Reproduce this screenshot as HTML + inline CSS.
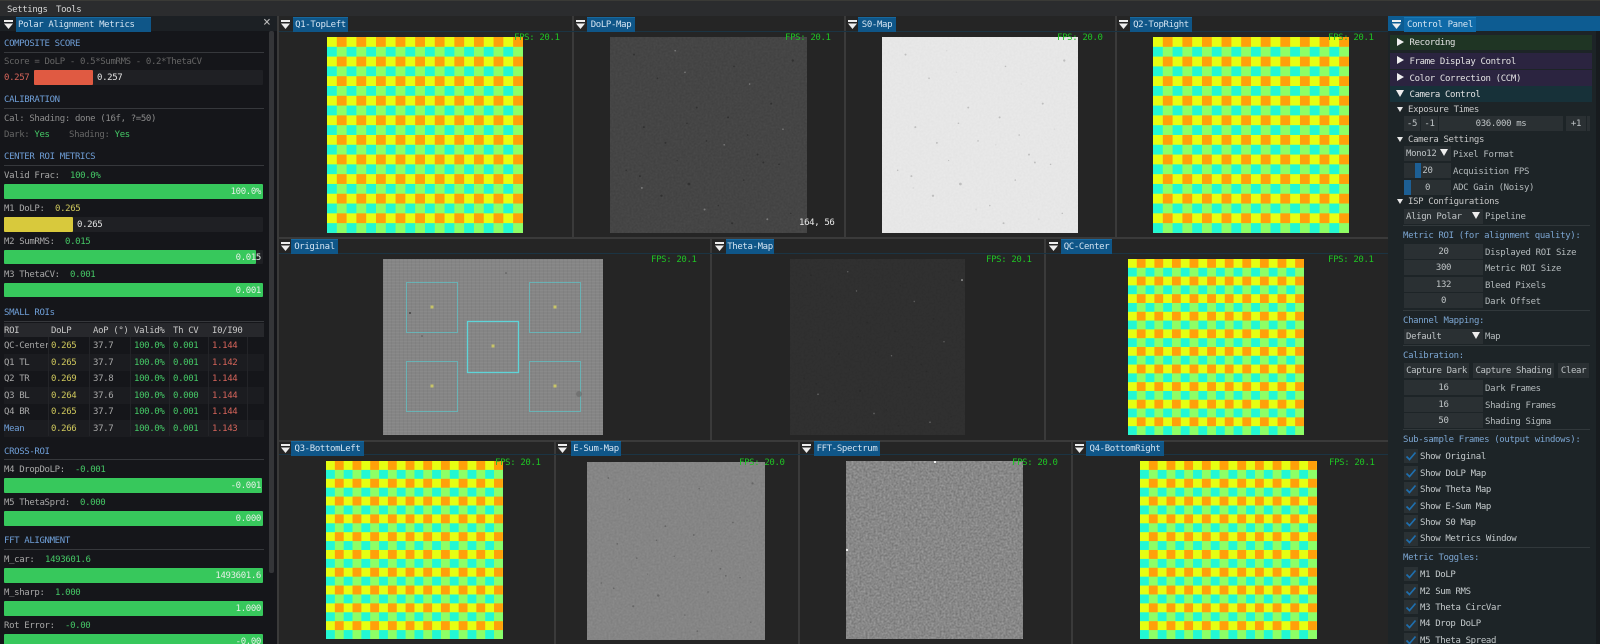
<!DOCTYPE html>
<html><head><meta charset="utf-8"><title>Polar Alignment</title>
<style>
html,body{margin:0;padding:0;background:#252525;width:1600px;height:644px;overflow:hidden}
#r{position:relative;width:1600px;height:644px;overflow:hidden;font:9px/14px "DejaVu Sans Mono","Liberation Mono",monospace;letter-spacing:-.35px;color:#c8c8c8;background:#252525;filter:blur(.3px)}
#r div,#r span.a,#r svg.a{position:absolute}
.t{white-space:nowrap;height:12px}
.h{color:#6f9fd8}
.d{color:#666}
.l{color:#a8a8a8}
.g{color:#45c866}
.y{color:#cfc85c}
.o{color:#d5645a}
.w{color:#e4e4e4}
.ln{height:1px;background:#36383c}
.tk{left:4px;width:259px;height:14.5px;background:#1f2024;border-radius:1px}
.br{left:4px;height:14.5px;background:#37c85c;border-radius:1px}
.bv{right:auto;width:253px;left:8px;text-align:right;color:#e4efe6;white-space:nowrap;height:12px}
.tab{background:#0f5688;height:15px;color:#d4e4f2;line-height:15px;text-align:center;white-space:nowrap;border-top:1px solid #17689e;box-sizing:border-box}
.fps{color:#1fc424;white-space:nowrap;height:12px}
.chk{background:conic-gradient(#ffa00a 25%,#8dff66 0 50%,#22f8d4 0 75%,#e6ff12 0);background-size:10% 10%}
.vl{background:#3a3a3a;width:1.5px}
.hl{background:#3a3a3a;height:2px}
.tl{background:#1b3443;height:1px}
.f{background:#2a3033;height:15px;text-align:center;line-height:17px;color:#bfc4c6;white-space:nowrap}
.rl{color:#b4babc;white-space:nowrap;height:12px;left:1485px}
.rh{color:#7ca6d2;white-space:nowrap;height:12px;left:1403px}
.rln{left:1403px;width:187px;height:1px;background:#31383b}
.td{width:0;height:0;border-left:3px solid transparent;border-right:3px solid transparent;border-top:5px solid #e8e8e8}
.tdb{width:0;height:0;border-left:4px solid transparent;border-right:4px solid transparent;border-top:7px solid #eee}
.tr{width:0;height:0;border-top:4px solid transparent;border-bottom:4px solid transparent;border-left:7px solid #eee}
.cb{left:1404px;width:14px;height:14px;background:#2a3134}
.cb svg{position:absolute;left:1px;top:1px}
.cl{left:1420px;color:#c4cacc;white-space:nowrap;height:12px}
.tb{height:16.5px;left:4px;width:259px}
.tb span{position:absolute;top:2px;white-space:nowrap}
.c1{left:0}.c2{left:47px}.c3{left:89px}.c4{left:130px}.c5{left:169px}.c6{left:208px}
</style></head><body><div id="r">
<svg width="0" height="0" style="position:absolute"><defs>
<filter id="nz" x="0" y="0" width="100%" height="100%" color-interpolation-filters="sRGB"><feTurbulence type="fractalNoise" baseFrequency=".5" numOctaves="2" seed="4"/><feColorMatrix values="1 0 0 0 0 1 0 0 0 0 1 0 0 0 0 0 0 0 0 1"/></filter>
<symbol id="wi" viewBox="0 0 9 9"><rect x="0" y="0" width="9" height="2" fill="#eee"/><polygon points="0,3.5 9,3.5 4.5,9" fill="#eee"/></symbol>
<symbol id="tick" viewBox="0 0 12 12"><path d="M1.5 6.5 L4.5 9.5 L10.5 2.5" fill="none" stroke="#1f6fae" stroke-width="1.7"/></symbol>
<symbol id="sp" viewBox="0 0 100 100"><g fill="#222"><circle cx="12" cy="9" r=".5"/><circle cx="24" cy="21" r=".4"/><circle cx="44" cy="36" r=".5"/><circle cx="63" cy="15" r=".4"/><circle cx="82" cy="34" r=".5"/><circle cx="93" cy="12" r=".6"/><circle cx="17" cy="46" r=".5"/><circle cx="39" cy="44" r=".4"/><circle cx="60" cy="41" r=".5"/><circle cx="28" cy="54" r=".5"/><circle cx="49" cy="53" r=".4"/><circle cx="70" cy="50" r=".4"/><circle cx="15" cy="71" r=".5"/><circle cx="40" cy="75" r=".7"/><circle cx="26" cy="81" r=".6"/><circle cx="75" cy="60" r=".5"/><circle cx="78" cy="64" r=".5"/><circle cx="86" cy="65" r=".4"/><circle cx="68" cy="73" r=".4"/><circle cx="62" cy="95" r=".5"/><circle cx="55" cy="86" r=".4"/><circle cx="92" cy="90" r=".4"/><circle cx="8" cy="68" r=".4"/><circle cx="34" cy="63" r=".3"/></g><g fill="#aaa"><circle cx="33" cy="7" r=".4"/><circle cx="71" cy="24" r=".4"/><circle cx="16" cy="77" r=".5"/><circle cx="58" cy="55" r=".4"/><circle cx="38" cy="18" r=".4"/><circle cx="88" cy="47" r=".4"/><circle cx="48" cy="88" r=".5"/><circle cx="80" cy="93" r=".5"/></g></symbol>
</defs></svg>

<!-- menu -->
<div style="left:0;top:0;width:1600px;height:16px;background:#2b2c2e;border-top:1px solid #3a3a36;box-sizing:border-box"></div>
<div class="t" style="left:7px;top:3px;color:#d8d8d8">Settings</div>
<div class="t" style="left:56px;top:3px;color:#d8d8d8">Tools</div>

<!-- left panel -->
<div style="left:0;top:16px;width:277px;height:628px;background:#15161a"></div>
<div style="left:0;top:16px;width:277px;height:15px;background:#1c2024"></div>
<svg class="a" style="left:4px;top:20px" width="9" height="9"><use href="#wi"/></svg>
<div class="tab" style="left:16px;top:17px;width:135px;text-align:left;padding-left:2px">Polar Alignment Metrics</div>
<div class="t" style="left:263px;top:16px;font-size:13px;color:#bbb">×</div>
<div style="left:269px;top:31px;width:5px;height:542px;background:#343538;border-radius:2px"></div>

<div class="t h" style="left:4px;top:37px">COMPOSITE SCORE</div><div class="ln" style="left:4px;top:52px;width:260px"></div>
<div class="t d" style="left:4px;top:55px">Score = DoLP - 0.5*SumRMS - 0.2*ThetaCV</div>
<div class="tk" style="left:34px;top:70px;width:229px"></div>
<div class="br" style="left:34px;top:70px;width:59px;background:#e05a42"></div>
<div class="t o" style="left:4px;top:71px">0.257</div><div class="t w" style="left:97px;top:71px">0.257</div>

<div class="t h" style="left:4px;top:93px">CALIBRATION</div><div class="ln" style="left:4px;top:108px;width:260px"></div>
<div class="t l" style="left:4px;top:112px;color:#8c8c8c">Cal: Shading: done (16f, ?=50)</div>
<div class="t d" style="left:4px;top:128px">Dark: <span class="g">Yes</span></div>
<div class="t d" style="left:69px;top:128px">Shading: <span class="g">Yes</span></div>

<div class="t h" style="left:4px;top:150px">CENTER ROI METRICS</div><div class="ln" style="left:4px;top:165px;width:260px"></div>
<div class="t l" style="left:4px;top:169px">Valid Frac:</div><div class="t g" style="left:70px;top:169px">100.0%</div>
<div class="tk" style="top:184px"></div><div class="br" style="top:184px;width:259px"></div><div class="bv" style="top:185px">100.0%</div>
<div class="t l" style="left:4px;top:202px">M1 DoLP:</div><div class="t y" style="left:55px;top:202px">0.265</div>
<div class="tk" style="top:217px"></div><div class="br" style="top:217px;width:69px;background:#d8c93c"></div><div class="t w" style="left:77px;top:218px">0.265</div>
<div class="t l" style="left:4px;top:235px">M2 SumRMS:</div><div class="t g" style="left:65px;top:235px">0.015</div>
<div class="tk" style="top:249.500px"></div><div class="br" style="top:249.500px;width:252px"></div><div class="bv" style="top:251px">0.015</div>
<div class="t l" style="left:4px;top:268px">M3 ThetaCV:</div><div class="t g" style="left:70px;top:268px">0.001</div>
<div class="tk" style="top:282.500px"></div><div class="br" style="top:282.500px;width:259px"></div><div class="bv" style="top:284px">0.001</div>

<div class="t h" style="left:4px;top:306px">SMALL ROIs</div><div class="ln" style="left:4px;top:321px;width:260px"></div>
<div style="left:4px;top:323px;width:260px;height:14px;background:#27282c"></div>
<div style="left:4px;top:354px;width:260px;height:16.500px;background:#1b1c20"></div>
<div style="left:4px;top:387px;width:260px;height:16.500px;background:#1b1c20"></div>
<div style="left:4px;top:420px;width:260px;height:16.500px;background:#1b1c20"></div>
<div style="left:48px;top:337px;width:1px;height:99px;background:#232428"></div>
<div style="left:89px;top:337px;width:1px;height:99px;background:#232428"></div>
<div style="left:130px;top:337px;width:1px;height:99px;background:#232428"></div>
<div style="left:169px;top:337px;width:1px;height:99px;background:#232428"></div>
<div style="left:208px;top:337px;width:1px;height:99px;background:#232428"></div>
<div style="left:247px;top:337px;width:1px;height:99px;background:#232428"></div>
<div class="tb" style="top:322px;color:#c8c8c8"><span class="c1">ROI</span><span class="c2">DoLP</span><span class="c3">AoP (°)</span><span class="c4">Valid%</span><span class="c5">Th CV</span><span class="c6">I0/I90</span></div>
<div class="tb l" style="top:337px"><span class="c1" style="width:44px;overflow:hidden">QC-Center</span><span class="c2 y">0.265</span><span class="c3">37.7</span><span class="c4 g">100.0%</span><span class="c5 g">0.001</span><span class="c6 o">1.144</span></div>
<div class="tb l" style="top:354px"><span class="c1">Q1 TL</span><span class="c2 y">0.265</span><span class="c3">37.7</span><span class="c4 g">100.0%</span><span class="c5 g">0.001</span><span class="c6 o">1.142</span></div>
<div class="tb l" style="top:370px"><span class="c1">Q2 TR</span><span class="c2 y">0.269</span><span class="c3">37.8</span><span class="c4 g">100.0%</span><span class="c5 g">0.001</span><span class="c6 o">1.144</span></div>
<div class="tb l" style="top:387px"><span class="c1">Q3 BL</span><span class="c2 y">0.264</span><span class="c3">37.6</span><span class="c4 g">100.0%</span><span class="c5 g">0.000</span><span class="c6 o">1.144</span></div>
<div class="tb l" style="top:403px"><span class="c1">Q4 BR</span><span class="c2 y">0.265</span><span class="c3">37.7</span><span class="c4 g">100.0%</span><span class="c5 g">0.001</span><span class="c6 o">1.144</span></div>
<div class="tb l" style="top:420px"><span class="c1 h">Mean</span><span class="c2 y">0.266</span><span class="c3">37.7</span><span class="c4 g">100.0%</span><span class="c5 g">0.001</span><span class="c6 o">1.143</span></div>

<div class="t h" style="left:4px;top:445px">CROSS-ROI</div><div class="ln" style="left:4px;top:459px;width:260px"></div>
<div class="t l" style="left:4px;top:463px">M4 DropDoLP:</div><div class="t g" style="left:75px;top:463px">-0.001</div>
<div class="br" style="top:478px;width:258px"></div><div class="bv" style="top:479px">-0.001</div>
<div class="t l" style="left:4px;top:496px">M5 ThetaSprd:</div><div class="t g" style="left:80px;top:496px">0.000</div>
<div class="br" style="top:511px;width:259px"></div><div class="bv" style="top:512px">0.000</div>
<div class="t h" style="left:4px;top:534px">FFT ALIGNMENT</div><div class="ln" style="left:4px;top:549px;width:260px"></div>
<div class="t l" style="left:4px;top:553px">M_car:</div><div class="t g" style="left:45px;top:553px">1493601.6</div>
<div class="br" style="top:568px;width:259px"></div><div class="bv" style="top:569px">1493601.6</div>
<div class="t l" style="left:4px;top:586px">M_sharp:</div><div class="t g" style="left:55px;top:586px">1.000</div>
<div class="br" style="top:601px;width:259px"></div><div class="bv" style="top:602px">1.000</div>
<div class="t l" style="left:4px;top:619px">Rot Error:</div><div class="t g" style="left:65px;top:619px">-0.00</div>
<div class="br" style="top:634px;width:259px"></div><div class="bv" style="top:635px">-0.00</div>

<!-- center dividers -->
<div class="vl" style="left:277px;top:16px;height:628px"></div>
<div class="vl" style="left:572px;top:16px;height:222px"></div>
<div class="vl" style="left:844px;top:16px;height:222px"></div>
<div class="vl" style="left:1115px;top:16px;height:222px"></div>
<div class="vl" style="left:710px;top:238px;height:202px"></div>
<div class="vl" style="left:1044px;top:238px;height:202px"></div>
<div class="vl" style="left:554px;top:440px;height:204px"></div>
<div class="vl" style="left:798px;top:440px;height:204px"></div>
<div class="vl" style="left:1071px;top:440px;height:204px"></div>
<div class="hl" style="left:278px;top:237px;width:1110px"></div>
<div class="hl" style="left:278px;top:439.500px;width:1110px"></div>
<div class="tl" style="left:279px;top:31px;width:1109px"></div>
<div class="tl" style="left:279px;top:253px;width:1109px"></div>
<div class="tl" style="left:279px;top:454px;width:1109px"></div>

<!-- tabs row 1 -->
<svg class="a" style="left:281px;top:20px" width="9" height="9"><use href="#wi"/></svg><div class="tab" style="left:293px;top:17px;width:55px">Q1-TopLeft</div>
<svg class="a" style="left:576px;top:20px" width="9" height="9"><use href="#wi"/></svg><div class="tab" style="left:587px;top:17px;width:48px">DoLP-Map</div>
<svg class="a" style="left:848px;top:20px" width="9" height="9"><use href="#wi"/></svg><div class="tab" style="left:858px;top:17px;width:38px">S0-Map</div>
<svg class="a" style="left:1119px;top:20px" width="9" height="9"><use href="#wi"/></svg><div class="tab" style="left:1130px;top:17px;width:62px">Q2-TopRight</div>
<!-- tabs row 2 -->
<svg class="a" style="left:281px;top:242px" width="9" height="9"><use href="#wi"/></svg><div class="tab" style="left:291px;top:239px;width:47px">Original</div>
<svg class="a" style="left:715px;top:242px" width="9" height="9"><use href="#wi"/></svg><div class="tab" style="left:726px;top:239px;width:48px">Theta-Map</div>
<svg class="a" style="left:1049px;top:242px" width="9" height="9"><use href="#wi"/></svg><div class="tab" style="left:1061px;top:239px;width:51px">QC-Center</div>
<!-- tabs row 3 -->
<svg class="a" style="left:281px;top:444px" width="9" height="9"><use href="#wi"/></svg><div class="tab" style="left:291px;top:441px;width:73px">Q3-BottomLeft</div>
<svg class="a" style="left:558px;top:444px" width="9" height="9"><use href="#wi"/></svg><div class="tab" style="left:571px;top:441px;width:50px">E-Sum-Map</div>
<svg class="a" style="left:802px;top:444px" width="9" height="9"><use href="#wi"/></svg><div class="tab" style="left:814px;top:441px;width:66px">FFT-Spectrum</div>
<svg class="a" style="left:1075px;top:444px" width="9" height="9"><use href="#wi"/></svg><div class="tab" style="left:1086px;top:441px;width:78px">Q4-BottomRight</div>

<!-- images -->
<div class="chk" style="left:327px;top:37px;width:195.500px;height:196px"></div>
<div class="chk" style="left:1153px;top:37px;width:196px;height:196px"></div>
<div class="chk" style="left:1128px;top:259px;width:176px;height:176px"></div>
<div class="chk" style="left:326px;top:461px;width:177px;height:178px"></div>
<div class="chk" style="left:1140px;top:461px;width:177px;height:178px"></div>

<svg class="a" style="left:610px;top:37px" width="197" height="196"><rect width="197" height="196" fill="#424242"/><rect width="197" height="196" filter="url(#nz)" opacity=".05"/><use href="#sp" width="197" height="196" opacity=".55"/></svg>
<svg class="a" style="left:882px;top:37px" width="196" height="196"><rect width="196" height="196" fill="#ebebeb"/><rect width="196" height="196" filter="url(#nz)" opacity=".03"/><use href="#sp" width="196" height="196" opacity=".2"/></svg>
<svg class="a" style="left:790px;top:259px" width="175" height="176"><rect width="175" height="176" fill="#2e2e2e"/><rect width="175" height="176" filter="url(#nz)" opacity=".02"/><use href="#sp" width="175" height="176" opacity=".4"/><circle cx="172" cy="21" r=".8" fill="#ccc"/></svg>
<svg class="a" style="left:587px;top:461.500px" width="178" height="178"><rect width="178" height="178" fill="#868686"/><rect width="178" height="178" filter="url(#nz)" opacity=".08"/><use href="#sp" width="178" height="178" opacity=".3"/></svg>
<svg class="a" style="left:846px;top:461px" width="177" height="178"><rect width="177" height="178" fill="#8b8b8b"/><rect width="177" height="178" filter="url(#nz)" opacity=".25"/><rect x="88" y="0" width="2" height="2" fill="#eee"/><rect x="0" y="88" width="2" height="2" fill="#eee"/></svg>

<!-- original -->
<div style="left:383px;top:259px;width:220px;height:176px;background-color:#858585;background-image:repeating-linear-gradient(0deg,rgba(255,255,255,.04) 0 1px,transparent 1px 3px),repeating-linear-gradient(90deg,rgba(0,0,0,.04) 0 1px,transparent 1px 4px)"></div>
<svg class="a" style="left:383px;top:259px" width="220" height="176" fill="none">
<g stroke="#5ec4c8" stroke-width="1" opacity=".7"><rect x="23.500" y="23.500" width="51" height="50"/><rect x="146.500" y="23.500" width="51" height="50"/><rect x="23.500" y="102.500" width="51" height="50"/><rect x="146.500" y="102.500" width="51" height="50"/></g>
<rect x="84.500" y="62.500" width="51" height="51" stroke="#5ed4d8" stroke-width="1.300"/>
<g fill="#d8d460" opacity=".8"><rect x="47.500" y="46.500" width="3" height="3"/><rect x="170.500" y="46.500" width="3" height="3"/><rect x="108.500" y="85.500" width="3" height="3"/><rect x="47.500" y="125.500" width="3" height="3"/><rect x="170.500" y="125.500" width="3" height="3"/></g>
<circle cx="27" cy="54" r="1" fill="#444"/><circle cx="123" cy="14" r=".8" fill="#555"/><circle cx="39" cy="77" r=".8" fill="#555"/><circle cx="196" cy="135" r="3" fill="#666" opacity=".6"/></svg>

<!-- FPS -->
<div class="a fps" style="left:514px;top:31px">FPS: 20.1</div>
<div class="a fps" style="left:785px;top:31px">FPS: 20.1</div>
<div class="a fps" style="left:1057px;top:31px">FPS: 20.0</div>
<div class="a fps" style="left:1328px;top:31px">FPS: 20.1</div>
<div class="a fps" style="left:651px;top:253px">FPS: 20.1</div>
<div class="a fps" style="left:986px;top:253px">FPS: 20.1</div>
<div class="a fps" style="left:1328px;top:253px">FPS: 20.1</div>
<div class="a fps" style="left:495px;top:455.500px">FPS: 20.1</div>
<div class="a fps" style="left:739px;top:455.500px">FPS: 20.0</div>
<div class="a fps" style="left:1012px;top:455.500px">FPS: 20.0</div>
<div class="a fps" style="left:1329px;top:455.500px">FPS: 20.1</div>
<div class="t" style="left:799px;top:216px;color:#e8e8e8">164, 56</div>

<!-- right panel -->
<div style="left:1388px;top:16px;width:212px;height:628px;background:#1d2427"></div>
<div style="left:1388px;top:16px;width:212px;height:15px;background:#0d5c92"></div>
<svg class="a" style="left:1392px;top:20px" width="9" height="9"><use href="#wi"/></svg>
<div class="tab" style="left:1404px;top:17px;width:72px;background:#0f6aa8;border-top-color:#1a78b4">Control Panel</div>
<div style="left:1596px;top:31px;width:4px;height:613px;background:#171b1e"></div>

<div style="left:1390px;top:35px;width:202px;height:15px;background:#1f3524"></div>
<div style="left:1390px;top:53px;width:202px;height:15.500px;background:#2b2440"></div>
<div style="left:1390px;top:70px;width:202px;height:15.500px;background:#2b2440"></div>
<div style="left:1390px;top:86px;width:202px;height:15.500px;background:#173139"></div>
<div class="tr" style="left:1397px;top:38px"></div><div class="t w" style="left:1409.500px;top:36px">Recording</div>
<div class="tr" style="left:1397px;top:56px"></div><div class="t w" style="left:1409.500px;top:55px">Frame Display Control</div>
<div class="tr" style="left:1397px;top:73px"></div><div class="t w" style="left:1409.500px;top:71.500px">Color Correction (CCM)</div>
<div class="tdb" style="left:1396px;top:90px"></div><div class="t w" style="left:1409.500px;top:88px">Camera Control</div>

<div class="td" style="left:1397px;top:106.500px"></div><div class="t" style="left:1408px;top:103px">Exposure Times</div>
<div class="f" style="left:1404px;top:116px;width:16px">-5</div>
<div class="f" style="left:1421px;top:116px;width:17px">-1</div>
<div class="f" style="left:1439px;top:116px;width:124px">036.000 ms</div>
<div class="f" style="left:1566px;top:116px;width:20px">+1</div>
<div class="f" style="left:1587px;top:116px;width:3px;overflow:hidden"></div>

<div class="td" style="left:1397px;top:136.500px"></div><div class="t" style="left:1408px;top:133px">Camera Settings</div>
<div class="f" style="left:1404px;top:146px;width:47px;text-align:left;padding-left:2px;box-sizing:border-box">Mono12</div><div class="tdb" style="left:1440px;top:149px"></div>
<div class="rl a" style="left:1453px;top:147.500px">Pixel Format</div>
<div class="f" style="left:1404px;top:163px;width:47px">20</div><div style="left:1415px;top:163px;width:6px;height:15px;background:#1d5f94"></div>
<div class="rl a" style="left:1453px;top:164.500px">Acquisition FPS</div>
<div class="f" style="left:1404px;top:179.500px;width:47px">0</div><div style="left:1404px;top:180px;width:7px;height:15px;background:#1d5f94"></div>
<div class="rl a" style="left:1453px;top:181px">ADC Gain (Noisy)</div>
<div class="td" style="left:1397px;top:198.500px"></div><div class="t" style="left:1408px;top:195px">ISP Configurations</div>

<div class="f" style="left:1404px;top:209px;width:79px;text-align:left;padding-left:2px;box-sizing:border-box">Align Polar</div><div class="tdb" style="left:1472px;top:212px"></div>
<div class="rl a" style="top:210px">Pipeline</div>
<div class="rln a" style="top:225px"></div>
<div class="rh a" style="top:229px">Metric ROI (for alignment quality):</div>
<div class="f" style="left:1404px;top:244px;width:79px">20</div><div class="rl a" style="top:245.500px">Displayed ROI Size</div>
<div class="f" style="left:1404px;top:260px;width:79px">300</div><div class="rl a" style="top:262px">Metric ROI Size</div>
<div class="f" style="left:1404px;top:277px;width:79px">132</div><div class="rl a" style="top:278.500px">Bleed Pixels</div>
<div class="f" style="left:1404px;top:293px;width:79px">0</div><div class="rl a" style="top:295px">Dark Offset</div>
<div class="rln a" style="top:310px"></div>
<div class="rh a" style="top:314px">Channel Mapping:</div>
<div class="f" style="left:1404px;top:329px;width:79px;text-align:left;padding-left:2px;box-sizing:border-box">Default</div><div class="tdb" style="left:1472px;top:332px"></div>
<div class="rl a" style="top:330px">Map</div>
<div class="rln a" style="top:345px"></div>
<div class="rh a" style="top:349px">Calibration:</div>
<div class="f" style="left:1404px;top:363px;width:65px">Capture Dark</div>
<div class="f" style="left:1473px;top:363px;width:81px">Capture Shading</div>
<div class="f" style="left:1558px;top:363px;width:31px">Clear</div>
<div class="f" style="left:1404px;top:380px;width:79px">16</div><div class="rl a" style="top:382px">Dark Frames</div>
<div class="f" style="left:1404px;top:397px;width:79px">16</div><div class="rl a" style="top:398.500px">Shading Frames</div>
<div class="f" style="left:1404px;top:413px;width:79px">50</div><div class="rl a" style="top:415px">Shading Sigma</div>
<div class="rln a" style="top:429px"></div>
<div class="rh a" style="top:433px">Sub-sample Frames (output windows):</div>

<div class="cb" style="top:449px"><svg width="12" height="12"><use href="#tick"/></svg></div><div class="cl a" style="top:450px">Show Original</div>
<div class="cb" style="top:465.500px"><svg width="12" height="12"><use href="#tick"/></svg></div><div class="cl a" style="top:466.500px">Show DoLP Map</div>
<div class="cb" style="top:482px"><svg width="12" height="12"><use href="#tick"/></svg></div><div class="cl a" style="top:483px">Show Theta Map</div>
<div class="cb" style="top:498.500px"><svg width="12" height="12"><use href="#tick"/></svg></div><div class="cl a" style="top:499.500px">Show E-Sum Map</div>
<div class="cb" style="top:515px"><svg width="12" height="12"><use href="#tick"/></svg></div><div class="cl a" style="top:516px">Show S0 Map</div>
<div class="cb" style="top:531.500px"><svg width="12" height="12"><use href="#tick"/></svg></div><div class="cl a" style="top:532px">Show Metrics Window</div>
<div class="rln a" style="top:547px"></div>
<div class="rh a" style="top:551px">Metric Toggles:</div>
<div class="cb" style="top:567px"><svg width="12" height="12"><use href="#tick"/></svg></div><div class="cl a" style="top:568px">M1 DoLP</div>
<div class="cb" style="top:583.500px"><svg width="12" height="12"><use href="#tick"/></svg></div><div class="cl a" style="top:584.500px">M2 Sum RMS</div>
<div class="cb" style="top:600px"><svg width="12" height="12"><use href="#tick"/></svg></div><div class="cl a" style="top:601px">M3 Theta CircVar</div>
<div class="cb" style="top:616.500px"><svg width="12" height="12"><use href="#tick"/></svg></div><div class="cl a" style="top:617px">M4 Drop DoLP</div>
<div class="cb" style="top:633px"><svg width="12" height="12"><use href="#tick"/></svg></div><div class="cl a" style="top:633.500px">M5 Theta Spread</div>
</div></body></html>
